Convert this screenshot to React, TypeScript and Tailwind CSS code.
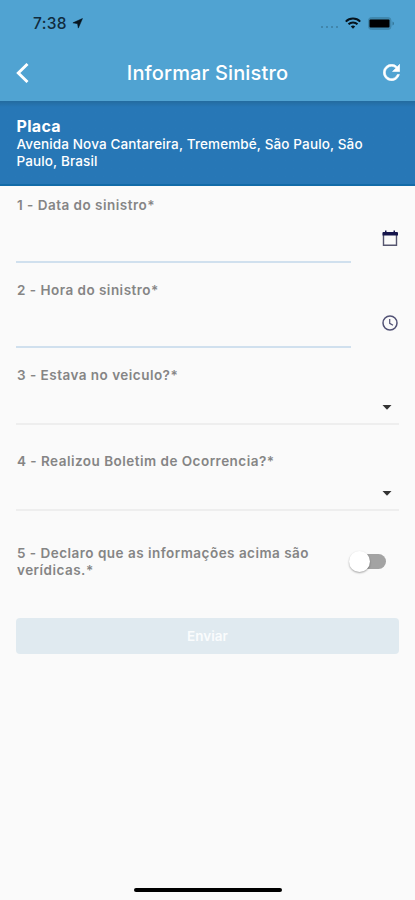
import React from "react";

type LabelProps = { children: React.ReactNode };

function Label({ children }: LabelProps) {
  return (
    <p className="h-[18px] pl-px whitespace-nowrap text-[13.5px] leading-[18px] font-semibold tracking-[0.48px] text-[#858585]">
      {children}
    </p>
  );
}

type FieldProps = { label: string; icon: React.ReactNode };

function PickerField({ label, icon }: FieldProps) {
  return (
    <div className="flex h-[85px] justify-between">
      <div className="w-[335px]">
        <Label>{label}</Label>
        <div className="h-[49px] border-b-2 border-[#d0e0ee]" />
      </div>
      <div className="mt-[34px] mr-px h-4 w-4">{icon}</div>
    </div>
  );
}

function SelectField({ label }: { label: string }) {
  return (
    <div className="h-[85px]">
      <Label>{label}</Label>
      <div className="flex h-[41px] justify-end border-b-2 border-[#eeeeee] pt-[21px] pr-[7px]">
        <svg viewBox="0 0 10 5" className="h-[5px] w-2.5" fill="#333333">
          <path d="M.5 0h9L5 4.8z" />
        </svg>
      </div>
    </div>
  );
}

function StatusBar() {
  return (
    <div className="flex h-[46px] items-center justify-between pr-5 pl-[33px]">
      <div className="flex items-center gap-[5px]">
        <span className="mt-px text-[15.5px] font-medium tracking-[0.3px] text-[#112b3d]">7:38</span>
        <svg viewBox="0 0 12 12" className="h-[11px] w-[11px]" fill="#08151f" stroke="#08151f" strokeWidth=".6">
          <path d="M11.4.6 6.9 11 6.1 6.2 1 5.3z" />
        </svg>
      </div>
      <div className="flex items-center">
        <div className="mt-2 mr-[7px] flex gap-[3px]">
          <span className="h-0.5 w-0.5 rounded-full bg-[#3c7c9f]" />
          <span className="h-0.5 w-0.5 rounded-full bg-[#3c7c9f]" />
          <span className="h-0.5 w-0.5 rounded-full bg-[#3c7c9f]" />
          <span className="h-0.5 w-0.5 rounded-full bg-[#3c7c9f]" />
        </div>
        <svg viewBox="0 0 16 12" className="mr-[7px] h-3 w-4" fill="none" stroke="#06131c" strokeWidth="2">
          <path d="M.8 4.6a10.2 10.2 0 0 1 14.4 0M3.5 7.3a6.4 6.4 0 0 1 9 0" />
          <path d="M8 11.8 5.8 9.6a3.1 3.1 0 0 1 4.4 0z" fill="#06131c" stroke="none" />
        </svg>
        <svg viewBox="0 0 27 13" className="h-[13px] w-[27px]">
          <rect x=".5" y=".5" width="22.5" height="12" rx="3" fill="#4088ae" stroke="#4088ae" />
          <rect x="1.5" y="2.5" width="20" height="8" rx="1" fill="#000" />
          <path d="M24.5 4.5c2 .7 2 3.3 0 4z" fill="#357698" />
        </svg>
      </div>
    </div>
  );
}

export default function App() {
  return (
    <div className="flex h-[900px] w-[415px] flex-col bg-[#fafafa] font-['Inter','Liberation_Sans',sans-serif]">
      <header className="h-[101px] bg-[#50a3d2]">
        <StatusBar />
        <div className="flex h-[54px] items-center justify-between pr-[15px] pl-4">
          <svg viewBox="0 0 13 20" className="h-5 w-[13px]" fill="none" stroke="#fff" strokeWidth="2.9">
            <path d="M11.5 1 2.3 10l9.2 9" />
          </svg>
          <h1 className="ml-[3px] text-[20px] font-medium tracking-[0.15px] text-white">Informar Sinistro</h1>
          <svg
            viewBox="3.7 3.7 16.6 16.6"
            className="mb-px h-[17px] w-[17px]"
            fill="#fff"
            stroke="#fff"
            strokeWidth=".6"
          >
            <path d="M17.65 6.35A7.96 7.96 0 0 0 12 4a8 8 0 1 0 7.73 10h-2.08A6 6 0 1 1 12 6c1.66 0 3.14.69 4.22 1.78L13 11h7V4z" />
          </svg>
        </div>
      </header>

      <section className="h-[85px] border-b-2 border-[#126ba8] bg-[#2777b6] bg-linear-to-b from-[#236b9f] from-0% to-[#2777b6] to-[6px] pt-4 pl-[16.5px] text-white">
        <h2 className="text-[16px] leading-[19px] font-bold tracking-[0.3px]">Placa</h2>
        <p className="whitespace-nowrap text-[13.5px] leading-[17px] font-medium tracking-[0.13px]">
          Avenida Nova Cantareira, Tremembé, São Paulo, São
          <br />
          Paulo, Brasil
        </p>
      </section>

      <main className="px-4 pt-[9.5px]">
        <div className="flex flex-col gap-[0.4px]">
          <PickerField
            label="1 - Data do sinistro*"
            icon={
              <svg viewBox="0 0 16 17" className="h-[17px] w-4">
                <path d="M1.5 3v12.2h13V3" fill="none" stroke="#55556f" strokeWidth="1.4" />
                <path d="M1 2h2V.5h1.5V2h7V.5H13V2h2a1 1 0 0 1 1 1v2.5H.5V3A1 1 0 0 1 1 2z" fill="#16164c" />
              </svg>
            }
          />
          <PickerField
            label="2 - Hora do sinistro*"
            icon={
              <svg viewBox="0 0 16 16" className="h-4 w-4" fill="none" stroke="#515174" strokeWidth="1.5">
                <circle cx="8" cy="8" r="7" />
                <path d="M7.7 4v4.3l3.3 2" strokeWidth="1.2" />
              </svg>
            }
          />
          <SelectField label="3 - Estava no veiculo?*" />
          <SelectField label="4 - Realizou Boletim de Ocorrencia?*" />
        </div>

        <div className="mt-[7px] flex justify-between">
          <div className="pt-px pl-px text-[13.5px] leading-[17px] font-semibold tracking-[0.48px] whitespace-nowrap text-[#858585]">
            5 - Declaro que as informações acima são
            <br />
            verídicas.*
          </div>
          <div className="mt-[7px] mr-[13px] flex h-[22px] w-[37px] items-center">
            <span className="z-10 h-[21px] w-[21px] shrink-0 rounded-full bg-white shadow-[0_1px_2px_rgba(0,0,0,0.35)]" />
            <span className="-ml-[12px] h-[15px] w-7 shrink-0 rounded-full bg-[#a3a3a3]" />
          </div>
        </div>

        <button
          disabled
          className="mt-[39.5px] flex h-9 w-full items-center justify-center rounded bg-[#e0eaf0] text-[13.5px] font-semibold text-[#fafcfd]"
        >
          Enviar
        </button>
      </main>

      <div className="mt-auto mb-2 ml-[134px] h-1 w-[148px] rounded-full bg-black" />
    </div>
  );
}
